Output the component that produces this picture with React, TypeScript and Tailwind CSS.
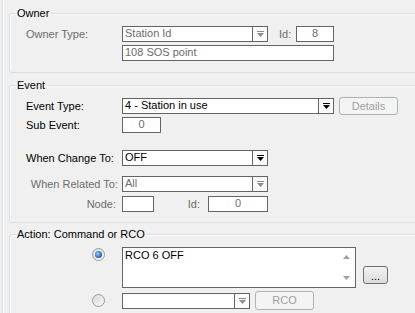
import React from "react";

const GRAY = "text-[#6d6d6d]";

function Arrow({ disabled }: { disabled?: boolean }) {
  const c = disabled ? "#8c8c8c" : "#000";
  return (
    <svg width="7" height="6" viewBox="0 0 7 6" className="block">
      <rect x="0" y="0" width="7" height="1" fill={c} />
      <polygon points="0,2 7,2 3.5,6" fill={c} />
    </svg>
  );
}

function Combo({ w, value, disabled }: { w: string; value: string; disabled?: boolean }) {
  return (
    <div className={`${w} h-[16px] flex border border-[#646464] bg-white`}>
      <div className={`flex-1 pl-[2px] leading-[13px] ${disabled ? GRAY : "text-black"}`}>{value}</div>
      <div className="w-[15px] border-l border-[#646464] flex items-center justify-center bg-[#fbfbfb]">
        <Arrow disabled={disabled} />
      </div>
    </div>
  );
}

function TextBox({ w, value, disabled, center }: { w: string; value?: string; disabled?: boolean; center?: boolean }) {
  return (
    <div
      className={`${w} h-[16px] border border-[#646464] bg-white px-[2px] leading-[13px] ${center ? "text-center" : ""} ${
        disabled ? GRAY : "text-black"
      }`}
    >
      {value}
    </div>
  );
}

function DisabledButton({ w, h, label }: { w: string; h: string; label: string }) {
  return (
    <div
      className={`${w} ${h} border border-[#adb2b5] rounded-[3px] bg-[#f4f4f4] flex items-center justify-center text-[#a0a0a0] leading-[13px]`}
    >
      {label}
    </div>
  );
}

function Radio({ checked }: { checked?: boolean }) {
  return (
    <div className="w-[13px] h-[13px] rounded-full border border-[#9a9a9a] bg-gradient-to-br from-[#dcdcdc] to-[#fafafa] flex items-center justify-center">
      {checked ? (
        <div className="w-[7px] h-[7px] rounded-full bg-[radial-gradient(circle_at_40%_40%,#9fd0f5,#1f6fc0_60%,#0f4a8a)]" />
      ) : (
        <div className="w-[7px] h-[7px] rounded-full bg-gradient-to-br from-[#d8d8d8] to-[#f4f4f4]" />
      )}
    </div>
  );
}

function Group({ title, h, mt, children }: { title: string; h: string; mt: string; children: React.ReactNode }) {
  return (
    <div
      className={`relative ${mt} ${h} w-[420px] shrink-0 border border-[#d5dfe5] rounded-[3px] shadow-[inset_1px_1px_0_#ffffff]`}
    >
      <div className="absolute left-[6px] top-[-7px] px-[1px] bg-[#f0f0f0] leading-[13px] text-black">{title}</div>
      {children}
    </div>
  );
}

export default function App() {
  return (
    <div className="w-[415px] h-[313px] overflow-hidden bg-[#f0f0f0] font-['Liberation_Sans',Arial,sans-serif] text-[11px] pl-[2px]">
      <div className="h-full border-l border-[#d5dfe5] shadow-[inset_1px_0_0_#ffffff] pl-[6px] flex flex-col">
        {/* Owner */}
        <Group title="Owner" h="h-[60px]" mt="mt-[13px]">
          <div className="pt-[12px] flex flex-col gap-[3px]">
            <div className="flex items-center">
              <div className={`w-[112px] pl-[16px] leading-[13px] ${GRAY}`}>Owner Type:</div>
              <Combo w="w-[146px]" value="Station Id" disabled />
              <div className={`w-[28px] pl-[11px] leading-[13px] ${GRAY}`}>Id:</div>
              <TextBox w="w-[38px]" value="8" disabled center />
            </div>
            <div className="flex items-center">
              <div className="w-[112px]" />
              <TextBox w="w-[212px]" value="108 SOS point" disabled />
            </div>
          </div>
        </Group>

        {/* Event */}
        <Group title="Event" h="h-[138px]" mt="mt-[12px]">
          <div className="pt-[11px] flex flex-col">
            <div className="flex items-center h-[18px]">
              <div className="w-[112px] pl-[16px] leading-[13px]">Event Type:</div>
              <Combo w="w-[212px]" value="4 - Station in use" />
              <div className="ml-[5px]">
                <DisabledButton w="w-[59px]" h="h-[18px]" label="Details" />
              </div>
            </div>
            <div className="flex items-center mt-[2px]">
              <div className="w-[112px] pl-[16px] leading-[13px]">Sub Event:</div>
              <TextBox w="w-[39px]" value="0" disabled center />
            </div>
            <div className="flex items-center mt-[17px]">
              <div className="w-[112px] pl-[16px] leading-[13px]">When Change To:</div>
              <Combo w="w-[146px]" value="OFF" />
            </div>
            <div className="flex items-center mt-[10px]">
              <div className={`w-[112px] pr-[4px] text-right leading-[13px] ${GRAY}`}>When Related To:</div>
              <Combo w="w-[146px]" value="All" disabled />
            </div>
            <div className="flex items-center mt-[4px]">
              <div className={`w-[112px] pr-[6px] text-right leading-[13px] ${GRAY}`}>Node:</div>
              <TextBox w="w-[32px]" />
              <div className={`w-[54px] pr-[8px] text-right leading-[13px] ${GRAY}`}>Id:</div>
              <TextBox w="w-[60px]" value="0" disabled center />
            </div>
          </div>
        </Group>

        {/* Action */}
        <Group title="Action: Command or RCO" h="h-[100px]" mt="mt-[11px]">
          <div className="pt-[12px] flex flex-col">
            <div className="flex items-start">
              <div className="w-[112px] pl-[82px] pt-[1px]">
                <Radio checked />
              </div>
              <div className="w-[234px] h-[41px] border border-[#646464] bg-white flex">
                <div className="flex-1 pl-[2px] pt-[1px] leading-[13px] text-black">RCO 6 OFF</div>
                <div className="w-[17px] flex flex-col items-center justify-between py-[7px]">
                  <svg width="7" height="4" viewBox="0 0 7 4">
                    <polygon points="0,4 7,4 3.5,0" fill="#a0a0a0" />
                  </svg>
                  <svg width="7" height="4" viewBox="0 0 7 4">
                    <polygon points="0,0 7,0 3.5,4" fill="#a0a0a0" />
                  </svg>
                </div>
              </div>
              <div className="ml-[7px] mt-[19px] w-[25px] h-[18px] border border-[#707070] rounded-[3px] bg-gradient-to-b from-[#f2f2f2] to-[#dcdcdc] flex items-end justify-center pb-[3px] leading-[8px] text-black">
                ...
              </div>
            </div>
            <div className="flex items-center mt-[3px] h-[19px]">
              <div className="w-[112px] pl-[82px]">
                <Radio />
              </div>
              <Combo w="w-[128px]" value="" disabled />
              <div className="ml-[5px]">
                <DisabledButton w="w-[59px]" h="h-[19px]" label="RCO" />
              </div>
            </div>
          </div>
        </Group>
      </div>
    </div>
  );
}
